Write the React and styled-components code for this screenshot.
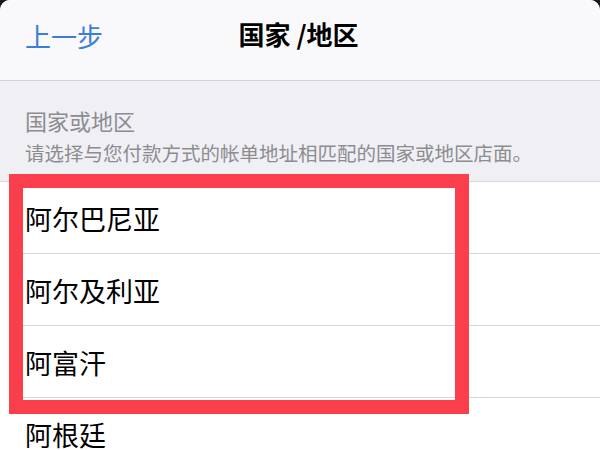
import React from 'react';
import styled, { createGlobalStyle } from 'styled-components';

const countries = ['阿尔巴尼亚', '阿尔及利亚', '阿富汗', '阿根廷'];

export default function App() {
  return (
    <>
      <GlobalStyle />
      <Screen>
        <NavBar>
          <BackButton>上一步</BackButton>
          <NavTitle>国家 /地区</NavTitle>
          <span />
        </NavBar>
        <SectionHeader>
          <SectionLabel>国家或地区</SectionLabel>
          <SectionHint>请选择与您付款方式的帐单地址相匹配的国家或地区店面。</SectionHint>
        </SectionHeader>
        <List>
          {countries.map(name => (
            <Row key={name}>{name}</Row>
          ))}
        </List>
        <Highlight />
      </Screen>
    </>
  );
}

const GlobalStyle = createGlobalStyle`
  html, body {
    margin: 0;
    padding: 0;
    background: #1a1a1a;
  }
  body {
    width: 600px;
    height: 450px;
    overflow: hidden;
    font-family: 'Noto Sans CJK SC', 'Noto Sans', sans-serif;
  }
`;

const Screen = styled.div`
  position: relative;
  width: 600px;
  height: 450px;
  overflow: hidden;
  background: #fff;
  border-radius: 10px 10px 0 0;
`;

const NavBar = styled.div`
  height: 80px;
  display: grid;
  grid-template-columns: 1fr auto 1fr;
  align-items: center;
  padding: 0 28px 0 25px;
  background: #f9f9fb;
  border-bottom: 1px solid #d3d3d8;
`;

const BackButton = styled.div`
  color: #3b7dd8;
  font-size: 26px;
  line-height: 1;
  margin-top: -8px;
`;

const NavTitle = styled.div`
  color: #000;
  font-size: 26px;
  font-weight: 700;
  line-height: 1;
  margin-top: -12px;
`;

const SectionHeader = styled.div`
  height: 101px;
  box-sizing: border-box;
  padding: 26px 0 0 25px;
  background: #efeff4;
  border-bottom: 1px solid #d8d8dc;
  display: flex;
  flex-direction: column;
  gap: 8px;
`;

const SectionLabel = styled.div`
  color: #8c8c91;
  font-size: 22px;
  line-height: 26px;
`;

const SectionHint = styled.div`
  color: #8c8c91;
  font-size: 19.5px;
  line-height: 24px;
  white-space: nowrap;
`;

const List = styled.div`
  background: #fff;
`;

const Row = styled.div`
  position: relative;
  height: 72px;
  display: flex;
  align-items: center;
  padding-left: 25px;
  font-size: 27px;
  color: #000;

  &::after {
    content: '';
    position: absolute;
    left: 23px;
    right: 0;
    bottom: 0;
    height: 1px;
    background: #d6d6da;
  }
`;

const Highlight = styled.div`
  position: absolute;
  left: 9px;
  top: 174px;
  width: 460px;
  height: 240px;
  box-sizing: border-box;
  border: 14px solid #fb3e4c;
  pointer-events: none;
`;
